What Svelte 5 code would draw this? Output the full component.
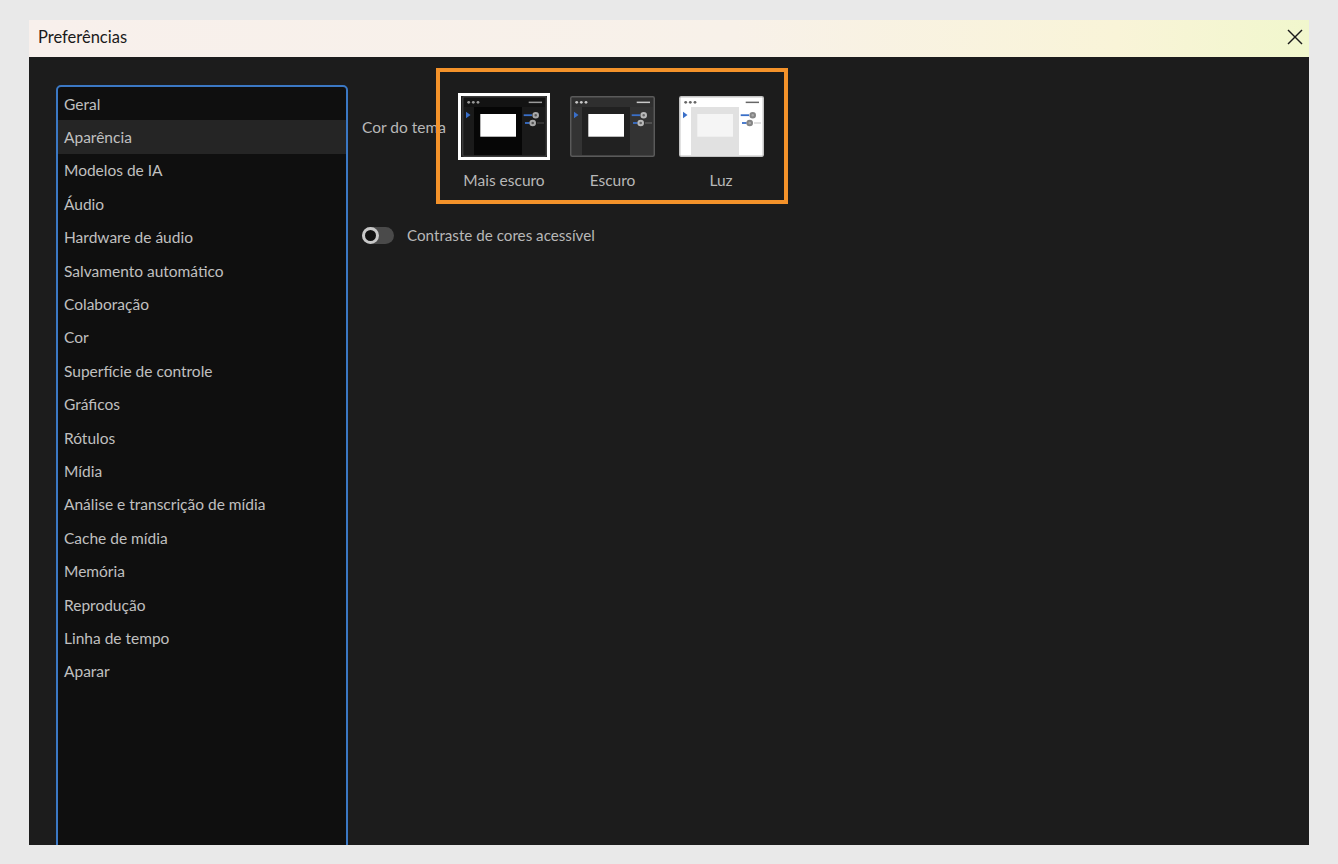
<script lang="ts">
	const sections = [
		'Geral',
		'Aparência',
		'Modelos de IA',
		'Áudio',
		'Hardware de áudio',
		'Salvamento automático',
		'Colaboração',
		'Cor',
		'Superfície de controle',
		'Gráficos',
		'Rótulos',
		'Mídia',
		'Análise e transcrição de mídia',
		'Cache de mídia',
		'Memória',
		'Reprodução',
		'Linha de tempo',
		'Aparar'
	];

	const themes = [
		{ id: 'darkest', label: 'Mais escuro', frame: '#3c3c3c', top: '#131313', side: '#1a1a1a', stage: '#060606', card: '#fff', dots: '#9a9a9a', knob: '#a8a8a8', hole: '#555' },
		{ id: 'dark', label: 'Escuro', frame: '#5a5a5a', top: '#2f2f2f', side: '#333', stage: '#212121', card: '#fff', dots: '#c8c8c8', knob: '#b8b8b8', hole: '#666' },
		{ id: 'light', label: 'Luz', frame: '#c4c4c4', top: '#fff', side: '#fff', stage: '#e1e1e1', card: '#f5f5f5', dots: '#666', knob: '#858585', hole: '#aaa' }
	];

	let selected = $state('darkest');
	let contrast = $state(false);
</script>

{#snippet preview(t)}
	<svg class="preview" width="85" height="61" viewBox="0 0 85 61" aria-hidden="true">
		<rect x="0.75" y="0.75" width="83.5" height="59.5" rx="1.5" fill={t.top} stroke={t.frame} stroke-width="1.5" />
		<rect x="2" y="11" width="10" height="48" fill={t.side} />
		<rect x="12" y="11" width="48" height="48" fill={t.stage} />
		<rect x="60" y="11" width="23" height="48" fill={t.side} />
		<circle cx="6.7" cy="6.3" r="1.4" fill={t.dots} />
		<circle cx="11.3" cy="6.3" r="1.4" fill={t.dots} />
		<circle cx="16" cy="6.3" r="1.4" fill={t.dots} />
		<rect x="66.7" y="5.6" width="13.3" height="1.5" fill={t.dots} />
		<path d="M4 15.7v6.6l4.5-3.3z" fill="#3a6fc8" />
		<rect x="18.3" y="18" width="35.7" height="22.7" fill={t.card} />
		<rect x="61.7" y="18.3" width="8.3" height="1.8" fill="#3a6fc8" />
		<circle cx="73.7" cy="19.3" r="2.3" fill={t.hole} stroke={t.knob} stroke-width="2" />
		<rect x="63" y="26.1" width="4.7" height="1.8" fill="#3a6fc8" />
		<circle cx="70.7" cy="27" r="2.3" fill={t.hole} stroke={t.knob} stroke-width="2" />
		<rect x="75" y="26.5" width="7" height="1" fill={t.dots} opacity="0.4" />
	</svg>
{/snippet}

<div class="window">
	<header class="titlebar">
		<span>Preferências</span>
		<button class="close" aria-label="Fechar">
			<svg width="16" height="16" viewBox="0 0 16 16" fill="none" stroke="#1a1a1a" stroke-width="1.4" aria-hidden="true">
				<path d="M1 1l14 14" />
				<path d="M15 1 1 15" />
			</svg>
		</button>
	</header>

	<div class="body">
		<nav class="sidebar">
			{#each sections as section}
				<div class="row" class:active={section === 'Aparência'}>{section}</div>
			{/each}
		</nav>

		<section class="pane">
			<div class="theme-line">
				<span class="theme-label">Cor do tema</span>
				<div class="themes">
					{#each themes as t}
						<button class="theme" onclick={() => (selected = t.id)}>
							<span class="thumb" class:selected={selected === t.id}>
								{@render preview(t)}
							</span>
							<span class="name">{t.label}</span>
						</button>
					{/each}
				</div>
			</div>

			<label class="switch">
				<input type="checkbox" bind:checked={contrast} />
				<span class="track"><span class="knob"></span></span>
				<span>Contraste de cores acessível</span>
			</label>

			<div class="highlight"></div>
		</section>
	</div>
</div>

<style>
	:global(body) {
		margin: 0;
		background: #e9e9e9;
	}

	.window {
		display: flex;
		flex-direction: column;
		height: 825px;
		margin: 20px 29px 19px;
		overflow: hidden;
		background: #1c1c1c;
		font-family: Lato, "Noto Sans", sans-serif;
		font-size: 15.5px;
	}

	.titlebar {
		display: flex;
		flex: none;
		align-items: center;
		justify-content: space-between;
		height: 37px;
		padding: 0 6px 4px 9px;
		box-sizing: border-box;
		background: linear-gradient(90deg, #f8f0ec 0%, #f8f1e9 55%, #f9f4d8 85%, #f1f7cd 100%);
		color: #1a1a1a;
		font-size: 16.5px;
	}

	.close {
		display: flex;
		align-items: center;
		padding: 0;
		border: none;
		background: none;
	}

	.body {
		display: flex;
		flex: 1;
		min-height: 0;
		padding: 28px 0 0 27px;
	}

	.sidebar {
		flex: none;
		width: 288px;
		height: 800px;
		background: #0f0f0f;
		border: 2px solid #3b78c4;
		border-radius: 5px;
		color: #c0c0c0;
	}

	.row {
		display: flex;
		align-items: center;
		height: 33.4px;
		padding-left: 6px;
	}

	.row.active {
		background: #252525;
	}

	.pane {
		position: relative;
		flex: 1;
		padding: 8px 0 0 14px;
		color: #b8b8b8;
	}

	.theme-line {
		display: flex;
	}

	.theme-label {
		flex: none;
		width: 96px;
		margin-top: 24px;
		line-height: 20px;
	}

	.themes {
		display: flex;
		gap: 16.5px;
	}

	.theme {
		display: flex;
		flex-direction: column;
		align-items: center;
		width: 92px;
		padding: 0;
		border: none;
		background: none;
		color: inherit;
		font: inherit;
	}

	.thumb {
		display: flex;
		align-items: center;
		justify-content: center;
		width: 92px;
		height: 67px;
		box-sizing: border-box;
	}

	.thumb.selected {
		border: 3px solid #fff;
	}

	.preview {
		display: block;
		flex: none;
	}

	.name {
		margin-top: 9px;
		line-height: 22px;
	}

	.switch {
		display: flex;
		align-items: center;
		gap: 13px;
		margin-top: 34px;
		font-size: 15.2px;
		line-height: 20px;
	}

	.switch input {
		position: absolute;
		opacity: 0;
		pointer-events: none;
	}

	.track {
		display: flex;
		align-items: center;
		width: 32px;
		height: 17px;
		border-radius: 9px;
		background: #4a4a4a;
	}

	.knob {
		width: 17px;
		height: 17px;
		box-sizing: border-box;
		border: 3px solid #c8c8c8;
		border-radius: 50%;
		background: #111;
	}

	.highlight {
		position: absolute;
		top: -17px;
		left: 88px;
		width: 352px;
		height: 136px;
		box-sizing: border-box;
		border: 4px solid #f4922a;
		pointer-events: none;
	}
</style>
